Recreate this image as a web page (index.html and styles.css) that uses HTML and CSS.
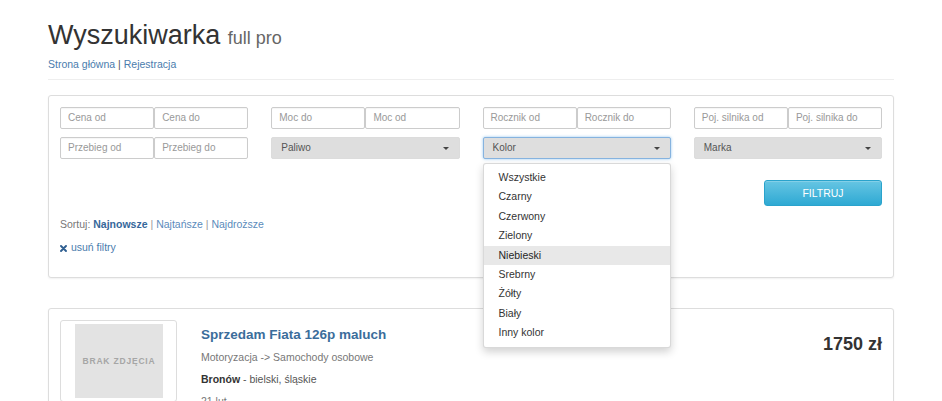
FILE: index.html
```html
<!DOCTYPE html>
<html lang="pl">
<head>
<meta charset="utf-8">
<title>Wyszukiwarka full pro</title>
<link rel="stylesheet" href="styles.css">
</head>
<body>
<div class="container">
  <header class="page-header">
    <h1>Wyszukiwarka <small>full pro</small></h1>
    <nav class="top-links"><a href="#">Strona główna</a> | <a href="#">Rejestracja</a></nav>
  </header>

  <section class="panel filters">
    <div class="filter-grid">
      <div class="col">
        <div class="pair"><div class="field">Cena od</div><div class="field">Cena do</div></div>
        <div class="pair"><div class="field">Przebieg od</div><div class="field">Przebieg do</div></div>
      </div>
      <div class="col">
        <div class="pair"><div class="field">Moc do</div><div class="field">Moc od</div></div>
        <div class="select">Paliwo<span class="caret"></span></div>
      </div>
      <div class="col">
        <div class="pair"><div class="field">Rocznik od</div><div class="field">Rocznik do</div></div>
        <div class="select-wrap">
          <div class="select focused">Kolor<span class="caret"></span></div>
          <ul class="dropdown">
            <li>Wszystkie</li>
            <li>Czarny</li>
            <li>Czerwony</li>
            <li>Zielony</li>
            <li class="active">Niebieski</li>
            <li>Srebrny</li>
            <li>Żółty</li>
            <li>Biały</li>
            <li>Inny kolor</li>
          </ul>
        </div>
      </div>
      <div class="col">
        <div class="pair"><div class="field">Poj. silnika od</div><div class="field">Poj. silnika do</div></div>
        <div class="select">Marka<span class="caret"></span></div>
        <button class="btn-filter" type="button">FILTRUJ</button>
      </div>
    </div>
    <div class="sort"><span class="sort-label">Sortuj:</span> <a class="current" href="#">Najnowsze</a> <span class="sep">|</span> <a href="#">Najtańsze</a> <span class="sep">|</span> <a href="#">Najdroższe</a></div>
    <div class="clear"><a href="#"><svg class="x-icon" width="7" height="7" viewBox="0 0 7 7"><path d="M1 1 L6 6 M6 1 L1 6" stroke="currentColor" stroke-width="1.9" stroke-linecap="round"/></svg> usuń filtry</a></div>
  </section>

  <article class="panel listing">
    <div class="thumb"><div class="no-photo">BRAK ZDJĘCIA</div></div>
    <div class="listing-body">
      <h4 class="listing-title"><a href="#">Sprzedam Fiata 126p maluch</a></h4>
      <p class="meta">Motoryzacja -&gt; Samochody osobowe</p>
      <p class="place"><b>Bronów</b> - bielski, śląskie</p>
      <p class="meta date">21 lut</p>
    </div>
    <div class="price">1750 zł</div>
  </article>
</div>
</body>
</html>
```

FILE: styles.css
```css
body {
  margin: 0;
  font-family: "Liberation Sans", Arial, sans-serif;
  font-size: 10.5px;
  color: #333;
  background: #fff;
}

a {
  color: #4a7cad;
  text-decoration: none;
}

.container {
  width: 846px;
  margin: 0 auto;
}

.page-header {
  padding-top: 20px;
  padding-bottom: 7px;
  border-bottom: 1px solid #eee;
  margin-bottom: 15px;
}

.page-header h1 {
  margin: 0;
  font-size: 27px;
  line-height: 30px;
  font-weight: normal;
  color: #333;
}

.page-header h1 small {
  font-size: 18px;
  line-height: 1;
  color: #666;
}

.top-links {
  margin-top: 7px;
  line-height: 15px;
  color: #555;
}

.panel {
  background: #fff;
  border: 1px solid #ddd;
  border-radius: 3px;
  box-shadow: 0 1px 2px rgba(0, 0, 0, 0.06);
}

.filters {
  padding: 11px 11px 22px 11px;
}

.filter-grid {
  display: grid;
  grid-template-columns: repeat(4, 1fr);
  column-gap: 23px;
  align-items: start;
}

.col {
  display: flex;
  flex-direction: column;
  gap: 8px;
}

.pair {
  display: flex;
}

.field {
  flex: 1;
  height: 22px;
  box-sizing: border-box;
  border: 1px solid #ccc;
  border-radius: 2px;
  padding: 0 7px;
  font-size: 10px;
  line-height: 20px;
  color: #999;
  white-space: nowrap;
  overflow: hidden;
  box-shadow: inset 0 1px 1px rgba(0, 0, 0, 0.04);
}

.select-wrap {
  position: relative;
}

.select {
  position: relative;
  height: 22px;
  box-sizing: border-box;
  border: 1px solid #dcdcdc;
  border-radius: 2px;
  background: #dedede;
  padding: 0 9px;
  font-size: 10px;
  line-height: 20px;
  color: #555;
}

.select.focused {
  border-color: #86b3df;
  box-shadow: 0 0 3px rgba(102, 175, 233, 0.7);
}

.caret {
  position: absolute;
  right: 10px;
  top: 9px;
  width: 0;
  height: 0;
  border-left: 3px solid transparent;
  border-right: 3px solid transparent;
  border-top: 3px solid #444;
}

.dropdown {
  position: absolute;
  z-index: 10;
  left: 0;
  right: 0;
  top: calc(100% + 4px);
  margin: 0;
  padding: 4px 0;
  list-style: none;
  background: #fff;
  border: 1px solid rgba(0, 0, 0, 0.15);
  border-radius: 3px;
  box-shadow: 0 4px 9px rgba(0, 0, 0, 0.18);
}

.dropdown li {
  padding: 0 15px;
  line-height: 19.4px;
  color: #333;
}

.dropdown li.active {
  background: #e8e8e8;
  color: #262626;
}

.btn-filter {
  align-self: flex-end;
  margin-top: 13px;
  width: 118px;
  height: 26px;
  border: 1px solid #2aa3cc;
  border-radius: 3px;
  background: linear-gradient(#66c5e3, #2ea9d3);
  color: #fff;
  font-family: inherit;
  font-size: 10.5px;
  padding: 0;
  box-shadow: inset 0 1px 0 rgba(255, 255, 255, 0.2);
}

.sort {
  margin-top: 11px;
  line-height: 15px;
  color: #777;
}

.sort a {
  color: #5b8bbb;
}

.sort a.current {
  color: #36679a;
  font-weight: bold;
}

.sort .sep {
  color: #999;
}

.clear {
  margin-top: 8px;
  line-height: 15px;
}

.clear a {
  color: #4a7cad;
}

.x-icon {
  color: #2f5f91;
  vertical-align: -0.5px;
  margin-right: 1px;
}

.listing {
  margin-top: 30px;
  padding: 11px 11px 30px 11px;
  display: flex;
  align-items: flex-start;
}

.thumb {
  width: 117px;
  box-sizing: border-box;
  border: 1px solid #ddd;
  border-radius: 3px;
  padding: 3px 13px 3px 14px;
  flex-shrink: 0;
}

.no-photo {
  height: 74px;
  background: #e3e3e3;
  display: flex;
  align-items: center;
  justify-content: center;
  font-size: 8.5px;
  font-weight: bold;
  letter-spacing: 0.8px;
  color: #a6a6a6;
  white-space: nowrap;
}

.listing-body {
  flex: 1;
  margin-left: 24px;
}

.listing-title {
  margin: 7px 0 8px;
  font-size: 13.5px;
  line-height: 15px;
  font-weight: bold;
}

.listing-title a {
  color: #3b6d9b;
}

.listing-body p {
  margin: 0 0 7px;
  line-height: 15px;
}

.meta {
  color: #777;
}

.place {
  color: #555;
}

.place b {
  color: #333;
}

.price {
  margin-top: 14px;
  font-size: 18px;
  line-height: 20px;
  font-weight: bold;
  color: #333;
}
```
